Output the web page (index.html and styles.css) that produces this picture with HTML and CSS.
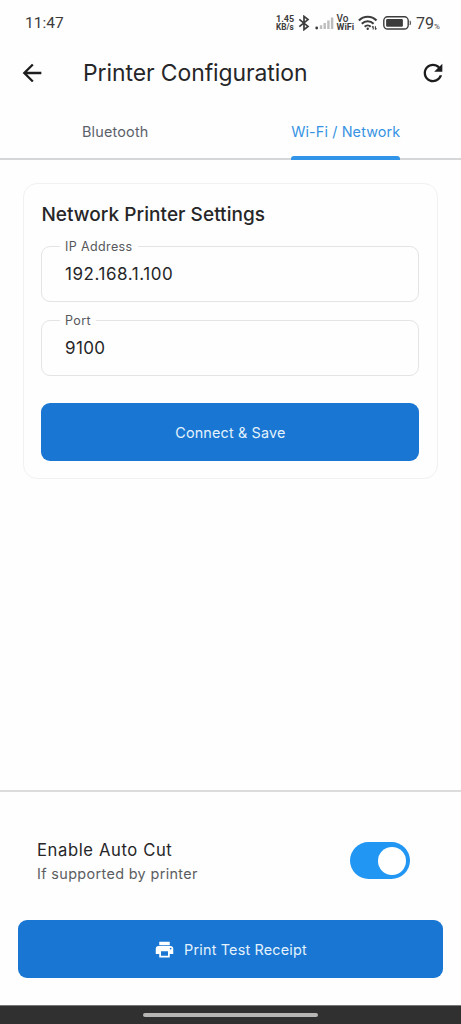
FILE: index.html
```html
<!DOCTYPE html>
<html lang="en">
<head>
<meta charset="utf-8">
<title>Printer Configuration</title>
<link rel="stylesheet" href="styles.css">
</head>
<body>
<div class="screen">
  <div class="status">
    <span class="clock">11:47</span>
    <div class="indicators">
      <span class="speed"><span class="rate">1.45</span><span class="unit">KB/s</span></span>
      <svg class="bluetooth" width="12" height="16" viewBox="0 0 12 16" fill="none" stroke="#3c3c3c" stroke-width="1.7"><path d="M1.3 4.3 10 11.4 6 14.6V1.4L10 4.6 1.3 11.7"/></svg>
      <svg class="signal" width="19" height="14" viewBox="0 0 19 14"><circle cx="1.7" cy="12" r="1.4" fill="#3c3c3c"/><path d="M4.8 9.3h2.4V13H4.8zM8.5 7h2.4v6H8.5zM12.2 4.4h2.4V13h-2.4zM15.9 1.6h2.4V13h-2.4z" fill="#bdbdbd"/></svg>
      <span class="vowifi"><span class="vo">Vo</span><span class="wf">WiFi</span></span>
      <svg class="wifi" width="20" height="16" viewBox="0 0 20 16" fill="none" stroke="#3c3c3c" stroke-width="2.1"><path d="M.9 5.5C5.8.5 13.6.5 18.5 5.5M3.8 8.8c3.4-3.4 8.4-3.4 11.8 0M6.7 11.7c1.7-1.7 4.3-1.7 6 0"/><circle cx="9.7" cy="13.7" r="1.2" fill="#3c3c3c" stroke="none"/><path stroke-width="1.1" d="M15.2 14.6v-3.4M17.4 11.2v3.4M14.1 12.4l1.1-1.2M18.5 13.4l-1.1 1.2"/></svg>
      <svg class="battery" width="29" height="14" viewBox="0 0 29 14"><rect x=".8" y=".8" width="24.4" height="12.2" rx="3.8" fill="none" stroke="#3c3c3c" stroke-width="1.4"/><rect x="3.1" y="3" width="16.8" height="7.8" rx="1.2" fill="#3c3c3c"/><path d="M27 4.8q1.4 2.1 0 4.2z" fill="#3c3c3c" stroke="#3c3c3c" stroke-width=".5"/></svg>
      <span class="percent">79<small>%</small></span>
    </div>
  </div>
  <header class="appbar">
    <svg class="back" width="28" height="28" viewBox="0 0 24 24" fill="#1d1d1f"><path d="M20 11H7.83l5.59-5.59L12 4l-8 8 8 8 1.41-1.41L7.83 13H20v-2z"/></svg>
    <h1 class="title">Printer Configuration</h1>
    <svg class="refresh" width="28" height="28" viewBox="0 0 24 24" fill="#1d1d1f"><path d="M17.65 6.35C16.2 4.9 14.21 4 12 4c-4.42 0-7.99 3.58-7.99 8s3.57 8 7.99 8c3.73 0 6.84-2.55 7.73-6h-2.08c-.82 2.33-3.04 4-5.65 4-3.31 0-6-2.69-6-6s2.69-6 6-6c1.66 0 3.14.69 4.22 1.78L13 11h7V4l-2.35 2.35z"/></svg>
  </header>
  <nav class="tabs">
    <div class="tab"><span class="tab-label tab-bt">Bluetooth</span></div>
    <div class="tab"><div class="tab-selected"><span class="tab-label tab-active">Wi-Fi / Network</span><div class="indicator"></div></div></div>
  </nav>
  <main class="content">
    <section class="card">
      <h2 class="card-title">Network Printer Settings</h2>
      <fieldset class="field"><legend class="label label-ip">IP Address</legend><div class="value value-ip">192.168.1.100</div></fieldset>
      <fieldset class="field field-port"><legend class="label label-port">Port</legend><div class="value value-port">9100</div></fieldset>
      <div class="button connect"><span class="connect-text">Connect &amp; Save</span></div>
    </section>
  </main>
  <footer class="bottom">
    <div class="option">
      <div class="option-text">
        <div class="option-title">Enable Auto Cut</div>
        <div class="option-sub">If supported by printer</div>
      </div>
      <div class="switch"><div class="thumb"></div></div>
    </div>
    <div class="button print">
      <svg width="21" height="21" viewBox="0 0 24 24" fill="#fff"><path d="M19 8H5c-1.66 0-3 1.34-3 3v6h4v4h12v-4h4v-6c0-1.66-1.34-3-3-3zm-3 11H8v-5h8v5zm3-7c-.55 0-1-.45-1-1s.45-1 1-1 1 .45 1 1-.45 1-1 1zm-1-9H6v4h12V3z"/></svg>
      <span class="print-text">Print Test Receipt</span>
    </div>
  </footer>
  <div class="navbar"><div class="handle"></div></div>
</div>
</body>
</html>
```
FILE: styles.css
```css
* { box-sizing: border-box; }
body { margin: 0; background: #fefefe; font-family: Inter, "Liberation Sans", sans-serif; color: #262628; }
h1, h2 { margin: 0; font-weight: 400; }
svg { display: block; flex: none; }
span, h1, h2, legend { white-space: nowrap; }
.screen { width: 461px; height: 1024px; display: flex; flex-direction: column; overflow: hidden; }

.status { height: 46px; padding: 0 20px 0 25px; display: flex; align-items: center; justify-content: space-between; color: #3c3c3c; font-family: Roboto, sans-serif; }
.clock { font-size: 15.5px; }
.indicators { display: flex; align-items: center; }
.speed, .vowifi { display: flex; flex-direction: column; line-height: 8px; font-weight: 700; }
.speed { width: 22px; }
.rate { font-size: 9px; }
.unit { font-size: 8.2px; }
.vowifi { width: 22px; font-size: 9px; margin-left: 2.5px; }
.vo { font-size: 10px; font-weight: 500; }
.bluetooth { margin-right: 5px; }
.wifi { margin-right: 5px; margin-left: -.5px; }
.percent { font-size: 16px; margin-left: 4px; width: 25px; }
.percent small { font-size: 8px; }

.appbar { height: 54px; padding: 0 14px 0 18px; display: flex; align-items: center; }
.title { flex: 1; margin-left: 37px; font-size: 22.9px; line-height: 28px; letter-spacing: -.06px; }

.tabs { height: 60px; display: flex; border-bottom: 2px solid #d5d6d8; }
.tab { flex: 1; height: 60px; display: flex; justify-content: center; }
.tab-selected { height: 60px; display: flex; flex-direction: column; }
.tab-label { font-size: 14.4px; line-height: 64px; height: 60px; color: #5b616a; letter-spacing: .2px; }
.tab-active { height: 56px; color: #3693e3; letter-spacing: .12px; }
.indicator { height: 4px; border-radius: 3px 3px 0 0; background: #3294e8; }

.content { height: 630px; padding: 23px; }
.card { width: 415px; height: 296px; border: 1px solid #f1f1f2; border-radius: 14px; padding: 18px 17.6px 0 17.4px; }
.card-title { font-size: 19px; line-height: 26px; font-weight: 500; letter-spacing: .05px; }
.field { margin: 11px 0 0; padding: 0 0 0 18px; height: 62.5px; border: 1px solid #e4e4e5; border-radius: 9px; min-width: 0; }
.field-port { margin-top: 11.5px; }
.label { font-size: 12.5px; line-height: 15px; padding: 0 5px 0 4.6px; color: #56585c; letter-spacing: .38px; }
.label-port { letter-spacing: .4px; }
.value { font-size: 17px; line-height: 24px; margin: 8px 0 0 4.6px; letter-spacing: .4px; }
.value-ip { letter-spacing: .56px; }
.button { height: 58px; border-radius: 9px; background: #1976d2; color: #e3f2fd; display: flex; align-items: center; justify-content: center; font-size: 14.4px; }
.connect { margin-top: 27.5px; }
.connect-text { letter-spacing: .15px; }

.bottom { height: 215px; border-top: 2px solid #dcdcdd; padding: 44.5px 18px 0; }
.option { height: 48px; display: flex; align-items: center; justify-content: space-between; padding: 0 33px 0 19px; }
.option-title { font-size: 16.6px; line-height: 26px; letter-spacing: .62px; }
.option-sub { font-size: 14.4px; line-height: 22px; color: #5b5d61; letter-spacing: .36px; }
.switch { width: 60px; height: 37px; border-radius: 19px; background: #2196f3; display: flex; align-items: center; justify-content: flex-end; padding-right: 4px; }
.thumb { width: 28px; height: 28px; border-radius: 50%; background: #fff; }
.print { margin-top: 35.5px; gap: 9px; }
.print-text { letter-spacing: .18px; }

.navbar { height: 19px; background: #303030; display: flex; justify-content: center; align-items: center; border-top: 1px solid #777; }
.handle { width: 175px; height: 4px; border-radius: 2px; background: #b8b5b5; }
```
